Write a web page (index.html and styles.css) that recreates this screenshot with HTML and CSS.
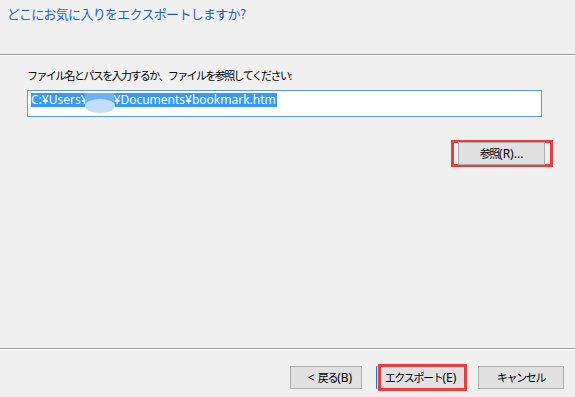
FILE: index.html
```html
<!DOCTYPE html>
<html lang="ja">
<head>
<meta charset="utf-8">
<link rel="stylesheet" href="styles.css">
</head>
<body>
<div class="dialog">
  <div class="header">
    <div class="title">どこにお気に入りをエクスポートしますか?</div>
  </div>
  <div class="sep"></div>
  <div class="content">
    <div class="label">ファイル名とパスを入力するか、ファイルを参照してください:</div>
    <div class="field"><span class="sel">C:¥Users¥<span class="blob"></span>¥Documents¥bookmark.htm</span></div>
    <div class="browse-row">
      <div class="mark-browse">
        <button class="btn btn-browse"><span class="jp">参照</span>(R)...</button>
      </div>
    </div>
  </div>
  <div class="sep"></div>
  <div class="footer">
    <button class="btn btn-back">&lt; <span class="jp">戻る</span>(B)</button>
    <div class="mark-wrap">
      <button class="btn btn-export"><span class="jp">エクスポート</span>(E)</button>
      <span class="redbox"></span>
    </div>
    <button class="btn btn-cancel"><span class="jp">キャンセル</span></button>
  </div>
</div>
</body>
</html>
```

FILE: styles.css
```css
html, body {
  margin: 0;
  padding: 0;
  background: #f0f0f0;
}
.dialog {
  width: 575px;
  height: 397px;
  display: flex;
  flex-direction: column;
  font-family: "Noto Sans", "Noto Sans CJK JP", sans-serif;
  color: #000;
}
.header {
  height: 54px;
  box-sizing: border-box;
  padding: 4px 0 0 7px;
}
.title {
  font-family: "Noto Sans CJK JP", sans-serif;
  font-size: 13px;
  letter-spacing: -0.7px;
  line-height: 20px;
  color: #1c5fd0;
}
.sep {
  height: 1px;
  background: #a0a0a0;
  border-bottom: 1px solid #ffffff;
}
.content {
  flex: 1;
  padding: 11px 0 0 27px;
  display: flex;
  flex-direction: column;
}
.label {
  font-family: "Noto Sans CJK JP", sans-serif;
  font-size: 11px;
  letter-spacing: -1.6px;
  line-height: 16px;
  margin-bottom: 7px;
}
.field {
  width: 515px;
  height: 27px;
  box-sizing: border-box;
  border: 1px solid #569de5;
  background: #fff;
  padding: 2px 0 0 3px;
}
.sel {
  display: inline-block;
  background: #3399ff;
  color: #fff;
  font-size: 12px;
  line-height: 14px;
  height: 14px;
  padding-right: 1px;
  vertical-align: top;
  white-space: nowrap;
}
.blob {
  display: inline-block;
  position: relative;
  width: 29px;
  height: 14px;
  margin-left: -3px;
  vertical-align: top;
  background: #6fb1f7;
}
.blob::after {
  content: "";
  position: absolute;
  left: 0;
  top: 6px;
  width: 30px;
  height: 14px;
  border-radius: 50%;
  background: #c4defa;
}
.browse-row {
  display: flex;
  justify-content: flex-end;
  padding-right: 22px;
  margin-top: 23px;
}
.mark-browse {
  border: 3px solid #f03a3c;
  padding: 0 5px 0 4px;
  height: 21px;
  display: flex;
  align-items: center;
}
.btn {
  font-family: "Noto Sans", "Noto Sans CJK JP", sans-serif;
  font-size: 12px;
  color: #000;
  background: #e1e1e1;
  border: 1px solid #adadad;
  height: 23px;
  padding: 0;
  box-sizing: border-box;
  line-height: 20px;
  white-space: nowrap;
}
.jp {
  font-family: "Noto Sans CJK JP", sans-serif;
  font-size: 11px;
  letter-spacing: -1.3px;
}
.btn-browse {
  width: 87px;
  flex: none;
}
.footer {
  height: 47px;
  display: flex;
  align-items: flex-start;
  justify-content: flex-end;
  padding: 16px 11px 0 0;
  box-sizing: border-box;
}
.btn-back {
  width: 72px;
  padding-left: 8px;
}
.mark-wrap {
  position: relative;
  margin-left: 14px;
}
.btn-export {
  width: 89px;
  border-left-color: #0078d7;
  display: block;
}
.redbox {
  position: absolute;
  left: 2px;
  top: -2px;
  width: 89px;
  height: 27px;
  box-sizing: border-box;
  border: 3px solid #f03a3c;
}
.btn-cancel {
  width: 86px;
  margin-left: 13px;
}
```
